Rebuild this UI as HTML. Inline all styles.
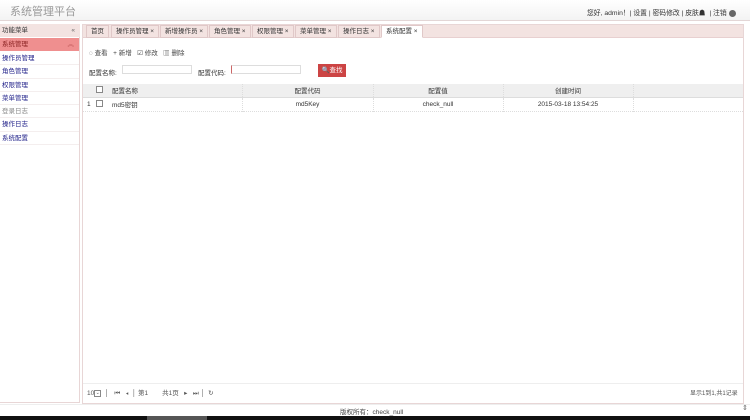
<!DOCTYPE html>
<html><head><meta charset="utf-8"><style>
*{margin:0;padding:0;box-sizing:border-box}
body{width:750px;height:420px;overflow:hidden;background:#fff;font-family:"Liberation Sans","Noto Sans CJK SC",sans-serif;font-size:7px;color:#333;position:relative}
.a{position:absolute}
.hd{left:0;top:0;width:750px;height:21px;background:linear-gradient(#fff,#f3f3f3);border-bottom:1px solid #e3d6d6}
.tab{position:absolute;top:25px;height:13px;border:1px solid #e0c8c8;background:#f3e3e1;font-size:6.5px;line-height:12px;padding:0 4px;color:#333}
.sb a{display:block;height:13.3px;line-height:13.3px;padding-left:2px;color:#22228a;font-size:6.5px;border-bottom:1px solid #f4eeee}
td{border-right:1px dotted #ddd;font-size:6.5px}
</style></head><body>
<div class="a hd"></div>
<div class="a" style="left:10px;top:3px;font-size:11px;color:#999">系统管理平台</div>
<div class="a" style="left:587px;top:7px;font-size:6.8px;color:#333;white-space:nowrap">您好, admin！| 设置 | 密码修改 | 皮肤<b>☗</b> &nbsp;| 注销 <span style="display:inline-block;width:7px;height:7px;border-radius:50%;background:#666;vertical-align:middle"></span></div>
<!-- sidebar -->
<div class="a" style="left:0;top:24px;width:80px;height:379px;border:1px solid #e8d6d6;border-left:none;background:#fff"></div>
<div class="a" style="left:0;top:24px;width:80px;height:13px;background:#f3e3e1;font-size:6.5px;line-height:13px;padding-left:2px">功能菜单<span style="position:absolute;right:5px;color:#666">«</span></div>
<div class="a" style="left:0;top:38px;width:79px;height:13px;background:#ef8f8f;font-size:6.5px;line-height:13px;padding-left:2px;color:#8a2222">系统管理<span style="position:absolute;right:5px;color:#b55">︽</span></div>
<div class="a sb" style="left:0;top:52px;width:79px">
<a>操作员管理</a><a>角色管理</a><a>权限管理</a><a>菜单管理</a><a style="color:#888">登录日志</a><a>操作日志</a><a>系统配置</a></div>
<!-- main -->
<div class="a" style="left:82px;top:24px;width:662px;height:380px;border:1px solid #e8d6d6;background:#fff"></div>
<div class="a" style="left:83px;top:25px;width:660px;height:13px;background:#f3e3e1;border-bottom:1px solid #e8d0d0"></div>
<div class="tab" style="left:86px">首页</div>
<div class="tab" style="left:111px">操作员管理 ×</div>
<div class="tab" style="left:160px">新增操作员 ×</div>
<div class="tab" style="left:209px">角色管理 ×</div>
<div class="tab" style="left:252px">权限管理 ×</div>
<div class="tab" style="left:295px">菜单管理 ×</div>
<div class="tab" style="left:338px">操作日志 ×</div>
<div class="tab" style="left:381px;background:#fff;border-bottom-color:#fff">系统配置 ×</div>
<div class="a" style="left:89px;top:47px;font-size:6.5px;color:#444;word-spacing:0">◌ 查看 &nbsp;&nbsp;+ 新增 &nbsp;&nbsp;☑ 修改 &nbsp;&nbsp;▥ 删除</div>
<div class="a" style="left:89px;top:67px;font-size:6.5px">配置名称:</div>
<div class="a" style="left:122px;top:65px;width:70px;height:9px;border:1px solid #ddd"></div>
<div class="a" style="left:198px;top:67px;font-size:6.5px">配置代码:</div>
<div class="a" style="left:231px;top:65px;width:70px;height:9px;border:1px solid #ddd;border-left-color:#c66"></div>
<div class="a" style="left:318px;top:64px;width:28px;height:13px;background:#cc4444;color:#fff;font-size:6.5px;line-height:13px;text-align:center">🔍查找</div>
<table class="a" style="left:83px;top:84px;width:660px;border-collapse:collapse;table-layout:fixed">
<tr style="height:13px;background:#efefef;border-bottom:1px solid #ddd"><td style="width:13px;border:none"></td><td style="width:13px;border:none"><span style="display:inline-block;width:7px;height:7px;border:1px solid #888;background:#fff"></span></td><td style="width:133px;padding-left:3px">配置名称</td><td style="width:131px;text-align:center">配置代码</td><td style="width:130px;text-align:center">配置值</td><td style="width:130px;text-align:center">创建时间</td><td style="border:none"></td></tr>
<tr style="height:14px;border-bottom:1px dotted #ddd"><td style="border:none;padding-left:4px">1</td><td style="border:none"><span style="display:inline-block;width:7px;height:7px;border:1px solid #888"></span></td><td style="padding-left:3px">md5密钥</td><td style="text-align:center">md5Key</td><td style="text-align:center">check_null</td><td style="text-align:center">2015-03-18 13:54:25</td><td style="border:none"></td></tr>
</table>
<div class="a" style="left:83px;top:383px;width:660px;height:1px;background:#eee"></div>
<div class="a" style="left:87px;top:387px;font-size:6.5px;color:#555;white-space:nowrap">10<span style="display:inline-block;width:7px;height:7px;border:1px solid #888;vertical-align:middle;font-size:5px;line-height:5px;text-align:center">⌄</span> &nbsp;│ &nbsp;&nbsp;⏮ &nbsp;&nbsp;◂ &nbsp;│ 第<span style="display:inline-block;width:14px;background:#fff">1</span> &nbsp;共1页 &nbsp;&nbsp;▸ &nbsp;&nbsp;⏭ │ &nbsp;↻</div>
<div class="a" style="left:690px;top:388px;font-size:6px;color:#555">显示1到1,共1记录</div>
<div class="a" style="left:0;top:404px;width:750px;height:12px;background:#fff;border-top:1px solid #eee"></div>
<div class="a" style="left:340px;top:406px;font-size:6.5px;color:#444">版权所有：check_null</div>
<div class="a" style="left:742px;top:404px;font-size:7px;color:#666">⇕</div>
<div class="a" style="left:0;top:416px;width:750px;height:4px;background:#111"></div>
<div class="a" style="left:147px;top:416px;width:60px;height:4px;background:#555"></div>
</body></html>
